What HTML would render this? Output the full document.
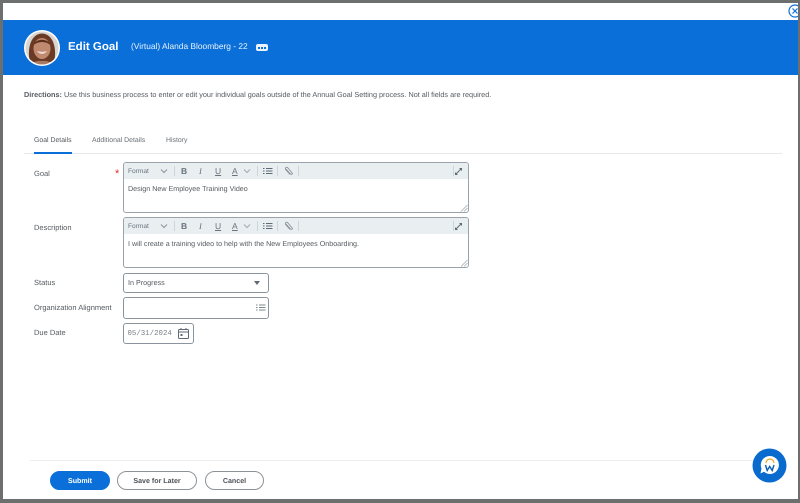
<!DOCTYPE html>
<html><head><meta charset="utf-8"><style>
*{box-sizing:border-box}
html,body{margin:0;padding:0;width:800px;height:503px;overflow:hidden;background:#6d6f6e}
body{position:relative;font-family:"Liberation Sans",sans-serif;color:#4c5157;text-rendering:geometricPrecision}
.a{position:absolute;white-space:nowrap}
#wrap{position:absolute;left:0;top:0;width:800px;height:503px;filter:blur(.35px)}
.lbl{font-size:7.500px;left:34px;color:#555a5f;line-height:10px}
.tab{font-size:6.900px;line-height:10px;top:136px}
.rte{position:absolute;left:123px;width:346px;height:51px;border:1px solid #9aa3ab;border-radius:3px;background:#fff;overflow:hidden}
.tb{position:absolute;left:0;top:0;right:0;height:16px;background:#e9eef1}
.sep{position:absolute;top:3px;width:1px;height:10px;background:#ced5da}
.tb span{position:absolute;color:#68737d;line-height:14px;top:1px}
.txt{position:absolute;left:4px;top:21px;font-size:7.150px;line-height:10px;color:#555a5f;white-space:nowrap}
.field{position:absolute;left:123px;border:1px solid #8a949e;border-radius:3px;background:#fff}
.btn{position:absolute;top:471px;height:19px;border-radius:10px;font-size:7.100px;line-height:19px;text-align:center;border:1px solid #8d9296;color:#4c5157;background:#fff;font-weight:bold}
</style></head><body>
<div id="wrap">
<div class="a" style="left:3px;top:3px;width:795px;height:496px;background:#fff"></div>
<div class="a" style="left:3px;top:20px;width:795px;height:55px;background:#0a6fd8"></div>

<svg class="a" style="left:24px;top:30px" width="36" height="36" viewBox="0 0 36 36">
<defs><clipPath id="c"><circle cx="18" cy="18" r="16.500"/></clipPath></defs>
<circle cx="18" cy="18" r="18" fill="#fff"/>
<g clip-path="url(#c)">
<rect width="36" height="36" fill="#d9d6d2"/>
<path d="M6 32C3 20 6 4 18 3.500C30 4 33 20 30 32Z" fill="#6a3a24"/>
<ellipse cx="18" cy="18.500" rx="8.500" ry="10.500" fill="#c08a70"/>
<path d="M9.500 15C12 8 24 8 26.500 15C22 11 14 11 9.500 15Z" fill="#5a2f1c"/>
<path d="M13.500 21.500Q18 25.500 22.500 21.500Q18 23 13.500 21.500Z" fill="#f3e6e3" stroke="#f0d8d5" stroke-width=".8"/>
<path d="M6 36Q10 30 18 31Q26 30 30 36Z" fill="#a87a62"/>
</g></svg>

<div class="a" style="left:68px;top:40px;font-size:11.500px;line-height:15px;font-weight:bold;color:#fff">Edit Goal</div>
<div class="a" style="left:131px;top:41px;font-size:8.400px;line-height:11px;color:#e8f2fc">(Virtual) Alanda Bloomberg - 22</div>
<div class="a" style="left:256px;top:44px;width:12px;height:7px;background:#eaf3fc;border-radius:2px"></div>
<div class="a" style="left:258px;top:47px;width:1.500px;height:1.500px;background:#0a6fd8;box-shadow:3px 0 #0a6fd8,6px 0 #0a6fd8"></div>

<svg class="a" style="left:786px;top:3px" width="14" height="16" viewBox="0 0 14 16"><circle cx="9" cy="8" r="6" fill="#fff" stroke="#0a6fd8" stroke-width="1.200"/><path d="M6.500 5.500L11.500 10.500M11.500 5.500L6.500 10.500" stroke="#0a6fd8" stroke-width="1.200"/></svg>
<div class="a" style="left:798px;top:0;width:2px;height:503px;background:#6d6f6e"></div>

<div class="a" style="left:24px;top:90px;font-size:7.280px;line-height:10px;color:#555a5f"><b>Directions:</b> Use this business process to enter or edit your individual goals outside of the Annual Goal Setting process. Not all fields are required.</div>

<div class="a tab" style="left:34px;color:#55595e">Goal Details</div>
<div class="a tab" style="left:92px;color:#6a6f74">Additional Details</div>
<div class="a tab" style="left:166px;color:#6a6f74">History</div>
<div class="a" style="left:24px;top:153px;width:758px;height:1px;background:#e6e9eb"></div>
<div class="a" style="left:34px;top:152px;width:38px;height:2px;background:#0a6fd8"></div>

<div class="a lbl" style="top:169px">Goal</div>
<div class="a" style="left:115px;top:169px;font-size:11px;line-height:11px;color:#de2e21">*</div>
<div class="a lbl" style="top:223px">Description</div>
<div class="a lbl" style="top:278px">Status</div>
<div class="a lbl" style="top:303px">Organization Alignment</div>
<div class="a lbl" style="top:328px">Due Date</div>

<div class="rte" style="top:162px">
<div class="tb">
<span style="left:4px;top:2px;font-size:6.600px">Format</span>
<svg class="a" style="left:36px;top:5px" width="8" height="6"><path d="M1 1.500L4 4.500L7 1.500" fill="none" stroke="#8a949e"/></svg>
<i class="sep" style="left:50px"></i>
<span style="left:57px;font-size:8.500px;font-weight:bold">B</span>
<span style="left:75px;font-size:8.500px;font-style:italic;font-family:'Liberation Serif',serif">I</span>
<span style="left:91px;font-size:8.500px;text-decoration:underline">U</span>
<span style="left:108px;font-size:8.500px;text-decoration:underline">A</span>
<svg class="a" style="left:119px;top:5px" width="8" height="6"><path d="M1 1.500L4 4.500L7 1.500" fill="none" stroke="#a4abb1"/></svg>
<i class="sep" style="left:133px"></i>
<svg class="a" style="left:139px;top:4px" width="10" height="8"><path d="M3 1.500H9.500M3 4H9.500M3 6.500H9.500" stroke="#5e6a75"/><path d="M0 1.500H1.500M0 4H1.500M0 6.500H1.500" stroke="#5e6a75"/></svg>
<i class="sep" style="left:153px"></i>
<svg class="a" style="left:160px;top:3px" width="10" height="10" viewBox="0 0 10 10"><path d="M2 3L6.500 8Q8 9 8.500 7.500L4 2Q2.500 .5 1.500 2Q1 3 2 4L6 8.500" fill="none" stroke="#8a949e" stroke-width=".9"/></svg>
<i class="sep" style="left:174px"></i>
<i class="sep" style="left:329px"></i>
<svg class="a" style="left:330px;top:4px" width="9" height="9" viewBox="0 0 9 9"><path d="M5 1H8V4ZM4 8H1V5Z" fill="#5e6a75"/><path d="M7 2L2 7" stroke="#5e6a75"/></svg>
</div>
<div class="txt">Design New Employee Training Video</div>
<svg class="a" style="right:0;bottom:0" width="8" height="8"><path d="M1 7.500L7.500 1M4 7.500L7.500 4" stroke="#a4abb1" stroke-width=".8"/></svg>
</div>

<div class="rte" style="top:217px">
<div class="tb">
<span style="left:4px;top:2px;font-size:6.600px">Format</span>
<svg class="a" style="left:36px;top:5px" width="8" height="6"><path d="M1 1.500L4 4.500L7 1.500" fill="none" stroke="#8a949e"/></svg>
<i class="sep" style="left:50px"></i>
<span style="left:57px;font-size:8.500px;font-weight:bold">B</span>
<span style="left:75px;font-size:8.500px;font-style:italic;font-family:'Liberation Serif',serif">I</span>
<span style="left:91px;font-size:8.500px;text-decoration:underline">U</span>
<span style="left:108px;font-size:8.500px;text-decoration:underline">A</span>
<svg class="a" style="left:119px;top:5px" width="8" height="6"><path d="M1 1.500L4 4.500L7 1.500" fill="none" stroke="#a4abb1"/></svg>
<i class="sep" style="left:133px"></i>
<svg class="a" style="left:139px;top:4px" width="10" height="8"><path d="M3 1.500H9.500M3 4H9.500M3 6.500H9.500" stroke="#5e6a75"/><path d="M0 1.500H1.500M0 4H1.500M0 6.500H1.500" stroke="#5e6a75"/></svg>
<i class="sep" style="left:153px"></i>
<svg class="a" style="left:160px;top:3px" width="10" height="10" viewBox="0 0 10 10"><path d="M2 3L6.500 8Q8 9 8.500 7.500L4 2Q2.500 .5 1.500 2Q1 3 2 4L6 8.500" fill="none" stroke="#8a949e" stroke-width=".9"/></svg>
<i class="sep" style="left:174px"></i>
<i class="sep" style="left:329px"></i>
<svg class="a" style="left:330px;top:4px" width="9" height="9" viewBox="0 0 9 9"><path d="M5 1H8V4ZM4 8H1V5Z" fill="#5e6a75"/><path d="M7 2L2 7" stroke="#5e6a75"/></svg>
</div>
<div class="txt">I will create a training video to help with the New Employees Onboarding.</div>
<svg class="a" style="right:0;bottom:0" width="8" height="8"><path d="M1 7.500L7.500 1M4 7.500L7.500 4" stroke="#a4abb1" stroke-width=".8"/></svg>
</div>

<div class="field" style="top:273px;width:146px;height:20px">
<div class="a" style="left:4px;top:4px;font-size:7.200px;line-height:10px;color:#555a5f">In Progress</div>
<svg class="a" style="left:129px;top:6px" width="8" height="6"><path d="M1 1H7L4 5Z" fill="#5e6a75"/></svg>
</div>

<div class="field" style="top:297px;width:146px;height:22px">
<svg class="a" style="left:132px;top:6px" width="10" height="8"><path d="M3 1H9.500M3 3.500H9.500M3 6H9.500M0 1H1.500M0 3.500H1.500M0 6H1.500" stroke="#7d8790" stroke-width=".9"/></svg>
</div>

<div class="field" style="top:323px;width:71px;height:21px">
<div class="a" style="left:3.500px;top:5px;font-family:'Liberation Mono',monospace;font-size:7.400px;line-height:10px;color:#7a8086">05/31/2024</div>
<svg class="a" style="left:54px;top:4px" width="11" height="11" viewBox="0 0 11 11"><rect x=".5" y="1.500" width="10" height="9" rx="1" fill="none" stroke="#5e6a75"/><path d="M.5 4H10.500M3 0V2M8 0V2" stroke="#5e6a75"/><rect x="2.500" y="6" width="2" height="2" fill="#5e6a75"/></svg>
</div>

<div class="a" style="left:30px;top:460px;width:752px;height:1px;background:#eceef0"></div>
<div class="btn" style="left:50px;width:60px;background:#0a6fd8;border-color:#0a6fd8;color:#fff">Submit</div>
<div class="btn" style="left:117px;width:80px">Save for Later</div>
<div class="btn" style="left:205px;width:59px">Cancel</div>

<svg class="a" style="left:752px;top:448px" width="36" height="36" viewBox="0 0 36 36">
<circle cx="17.500" cy="17.500" r="17" fill="#0a6bce"/>
<path d="M18 8A9 9 0 1 1 12 23.800L8.500 25.500L9.500 20.500A9 9 0 0 1 18 8Z" fill="#fff"/>
<path d="M14 15A4 4 0 0 1 22 15" fill="none" stroke="#f5a623" stroke-width="1.200"/>
<path d="M13.500 17L15.200 22.500L17.700 18.500L20.200 22.500L22 17" fill="none" stroke="#0a5cb3" stroke-width="1.400"/>
</svg>
</div>
</body></html>
